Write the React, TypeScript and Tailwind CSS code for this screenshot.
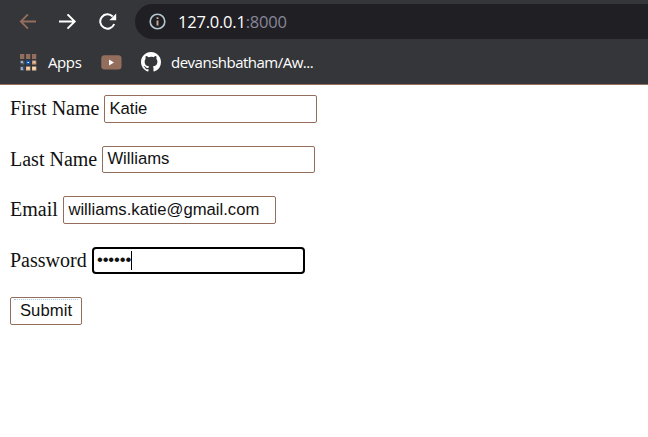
import React from "react";

const uiFont = "font-['Open_Sans','Noto_Sans',sans-serif]";
const fieldFont = "font-['Liberation_Sans',Arial,sans-serif]";

function BackArrow() {
  return (
    <svg width="18" height="16" viewBox="0 0 18 16" fill="none" stroke="#946e5d" strokeWidth="1.8">
      <path d="M17 7.5H2M9 .3 1.8 7.5 9 14.7" />
    </svg>
  );
}

function ForwardArrow() {
  return (
    <svg width="18" height="16" viewBox="0 0 18 16" fill="none" stroke="#fff" strokeWidth="1.9">
      <path d="M0 7.5H16M8.5 .3 15.7 7.5 8.5 14.7" />
    </svg>
  );
}

function Reload() {
  return (
    <svg width="18" height="18" viewBox="0 0 18 18" fill="none">
      <path d="M13.7 3.5A7.2 7.2 0 1 0 15.2 11" stroke="#fff" strokeWidth="2" />
      <path d="M17.2 .5v6.8H10.4z" fill="#fff" />
    </svg>
  );
}

function Info() {
  return (
    <svg width="17" height="17" viewBox="0 0 17 17" fill="none">
      <circle cx="8.5" cy="8.5" r="7.3" stroke="#b5c8d2" strokeWidth="1.6" />
      <path d="M8.5 7.6v5M8.5 4.2v1.9" stroke="#c5a99a" strokeWidth="1.9" />
    </svg>
  );
}

const appColors = [
  "#946e5d", "#946e5d", "#946e5d",
  "#54647c", "#1557ad", "#c79a76",
  "#4f6488", "#e6bd91", "#edc69b",
];

function AppsGrid() {
  return (
    <svg width="17" height="17" viewBox="0 0 17 17">
      {appColors.map((c, i) => (
        <rect key={i} x={(i % 3) * 6} y={Math.floor(i / 3) * 6 + (i > 2 ? 0.5 : 0)} width="4.3" height={i < 3 ? 5 : 4} fill={c} />
      ))}
      <path d="M1 8h2M2 13v3M7.5 8.5h1.5M13.5 8h1.5M7.5 14h1.5M13.5 14h1.5" stroke="#fff" strokeWidth="1" />
      <path d="M0 10h1.5M3 7h1.3M2.5 14h1.8" stroke="#35363a" strokeWidth="1" />
    </svg>
  );
}

function Video() {
  return (
    <svg width="21" height="15" viewBox="0 0 21 15">
      <rect x=".3" y=".3" width="20.2" height="14.2" rx="3.3" fill="#946e5d" />
      <path d="m8 4.6 5 2.9-5 2.9z" fill="#fff" />
    </svg>
  );
}

function GitHub() {
  return (
    <svg width="20" height="20" viewBox="0 0 16 16" fill="#fff">
      <path d="M8 0C3.58 0 0 3.58 0 8c0 3.54 2.29 6.53 5.47 7.59.4.07.55-.17.55-.38 0-.19-.01-.82-.01-1.49-2.01.37-2.53-.49-2.69-.94-.09-.23-.48-.94-.82-1.13-.28-.15-.68-.52-.01-.53.63-.01 1.08.58 1.23.82.72 1.21 1.87.87 2.33.66.07-.52.28-.87.51-1.07-1.78-.2-3.64-.89-3.64-3.95 0-.87.31-1.59.82-2.15-.08-.2-.36-1.02.08-2.12 0 0 .67-.21 2.2.82A7.7 7.7 0 0 1 8 3.86c.68 0 1.36.09 2 .27 1.53-1.04 2.2-.82 2.2-.82.44 1.1.16 1.92.08 2.12.51.56.82 1.27.82 2.15 0 3.07-1.87 3.75-3.65 3.95.29.25.54.73.54 1.48 0 1.07-.01 1.93-.01 2.2 0 .21.15.46.55.38A8.01 8.01 0 0 0 16 8c0-4.42-3.58-8-8-8z" />
    </svg>
  );
}

function Field({ label, labelWidth, height, children, focused = false }: {
  label: string;
  labelWidth: string;
  height: string;
  children: React.ReactNode;
  focused?: boolean;
}) {
  return (
    <div className={`flex items-center ${height}`}>
      <span className={`shrink-0 whitespace-nowrap pb-[2px] font-['Liberation_Serif','Times_New_Roman',serif] text-[20px] leading-[26px] ${labelWidth}`}>
        {label}
      </span>
      <div className={`flex h-full w-[213px] items-center bg-white pb-px text-[16.67px] leading-5 ${fieldFont} ${focused ? "rounded-[4px] border-2 border-black pl-[3px]" : "rounded-[2px] border border-[#946e5d] pl-[4.4px]"}`}>
        {children}
      </div>
    </div>
  );
}

export default function App() {
  return (
    <div className="h-[437px] w-[648px] overflow-hidden bg-white text-[#111]">
      <header className={`h-[85px] border-b border-[#946e5d] bg-[#35363a] text-white ${uiFont}`}>
        <div className="flex h-[43px] items-center pl-[19px]">
          <BackArrow />
          <div className="ml-[22px]"><ForwardArrow /></div>
          <div className="ml-[22px]"><Reload /></div>
          <div className="ml-[18px] flex h-[35px] flex-1 items-center rounded-l-full bg-[#202024] pl-[14px]">
            <Info />
            <span className="ml-3 text-[16.5px] leading-5 tracking-[-0.22px]">
              127.0.0.1<span className="text-[#88869a]">:8000</span>
            </span>
          </div>
        </div>
        <div className="flex h-[38px] items-center pl-5 text-[15px] leading-5">
          <AppsGrid />
          <span className="ml-[11px] w-[53px] pb-px tracking-[-0.4px]">Apps</span>
          <Video />
          <div className="ml-[19px]"><GitHub /></div>
          <span className="ml-[10px] pb-px tracking-[-0.5px]">devanshbatham/Aw...</span>
        </div>
      </header>
      <form className="flex flex-col items-start pl-[10px] pt-[10px]">
        <Field label="First Name" labelWidth="w-[94px]" height="h-7">Katie</Field>
        <div className="mt-[23px]">
          <Field label="Last Name" labelWidth="w-[92px]" height="h-[27px]">Williams</Field>
        </div>
        <div className="mt-[23px]">
          <Field label="Email" labelWidth="w-[53px]" height="h-7">williams.katie@gmail.com</Field>
        </div>
        <div className="mt-[23px]">
          <Field label="Password" labelWidth="w-[82px]" height="h-[27px]" focused>
            <span className="tracking-[-0.15px]">••••••</span>
            <span className="h-[19px] w-px bg-black" />
          </Field>
        </div>
        <button type="button" className={`mt-[23px] flex h-7 w-[72px] flex-col items-center rounded-[2px] border border-[#946e5d] bg-white px-[3px] pt-px text-[16.67px] leading-[22px] ${fieldFont}`}>
          <span className="w-full border-t border-dotted border-[#a5cbe5]" />
          <span className="tracking-[0.05px]">Submit</span>
        </button>
      </form>
    </div>
  );
}
